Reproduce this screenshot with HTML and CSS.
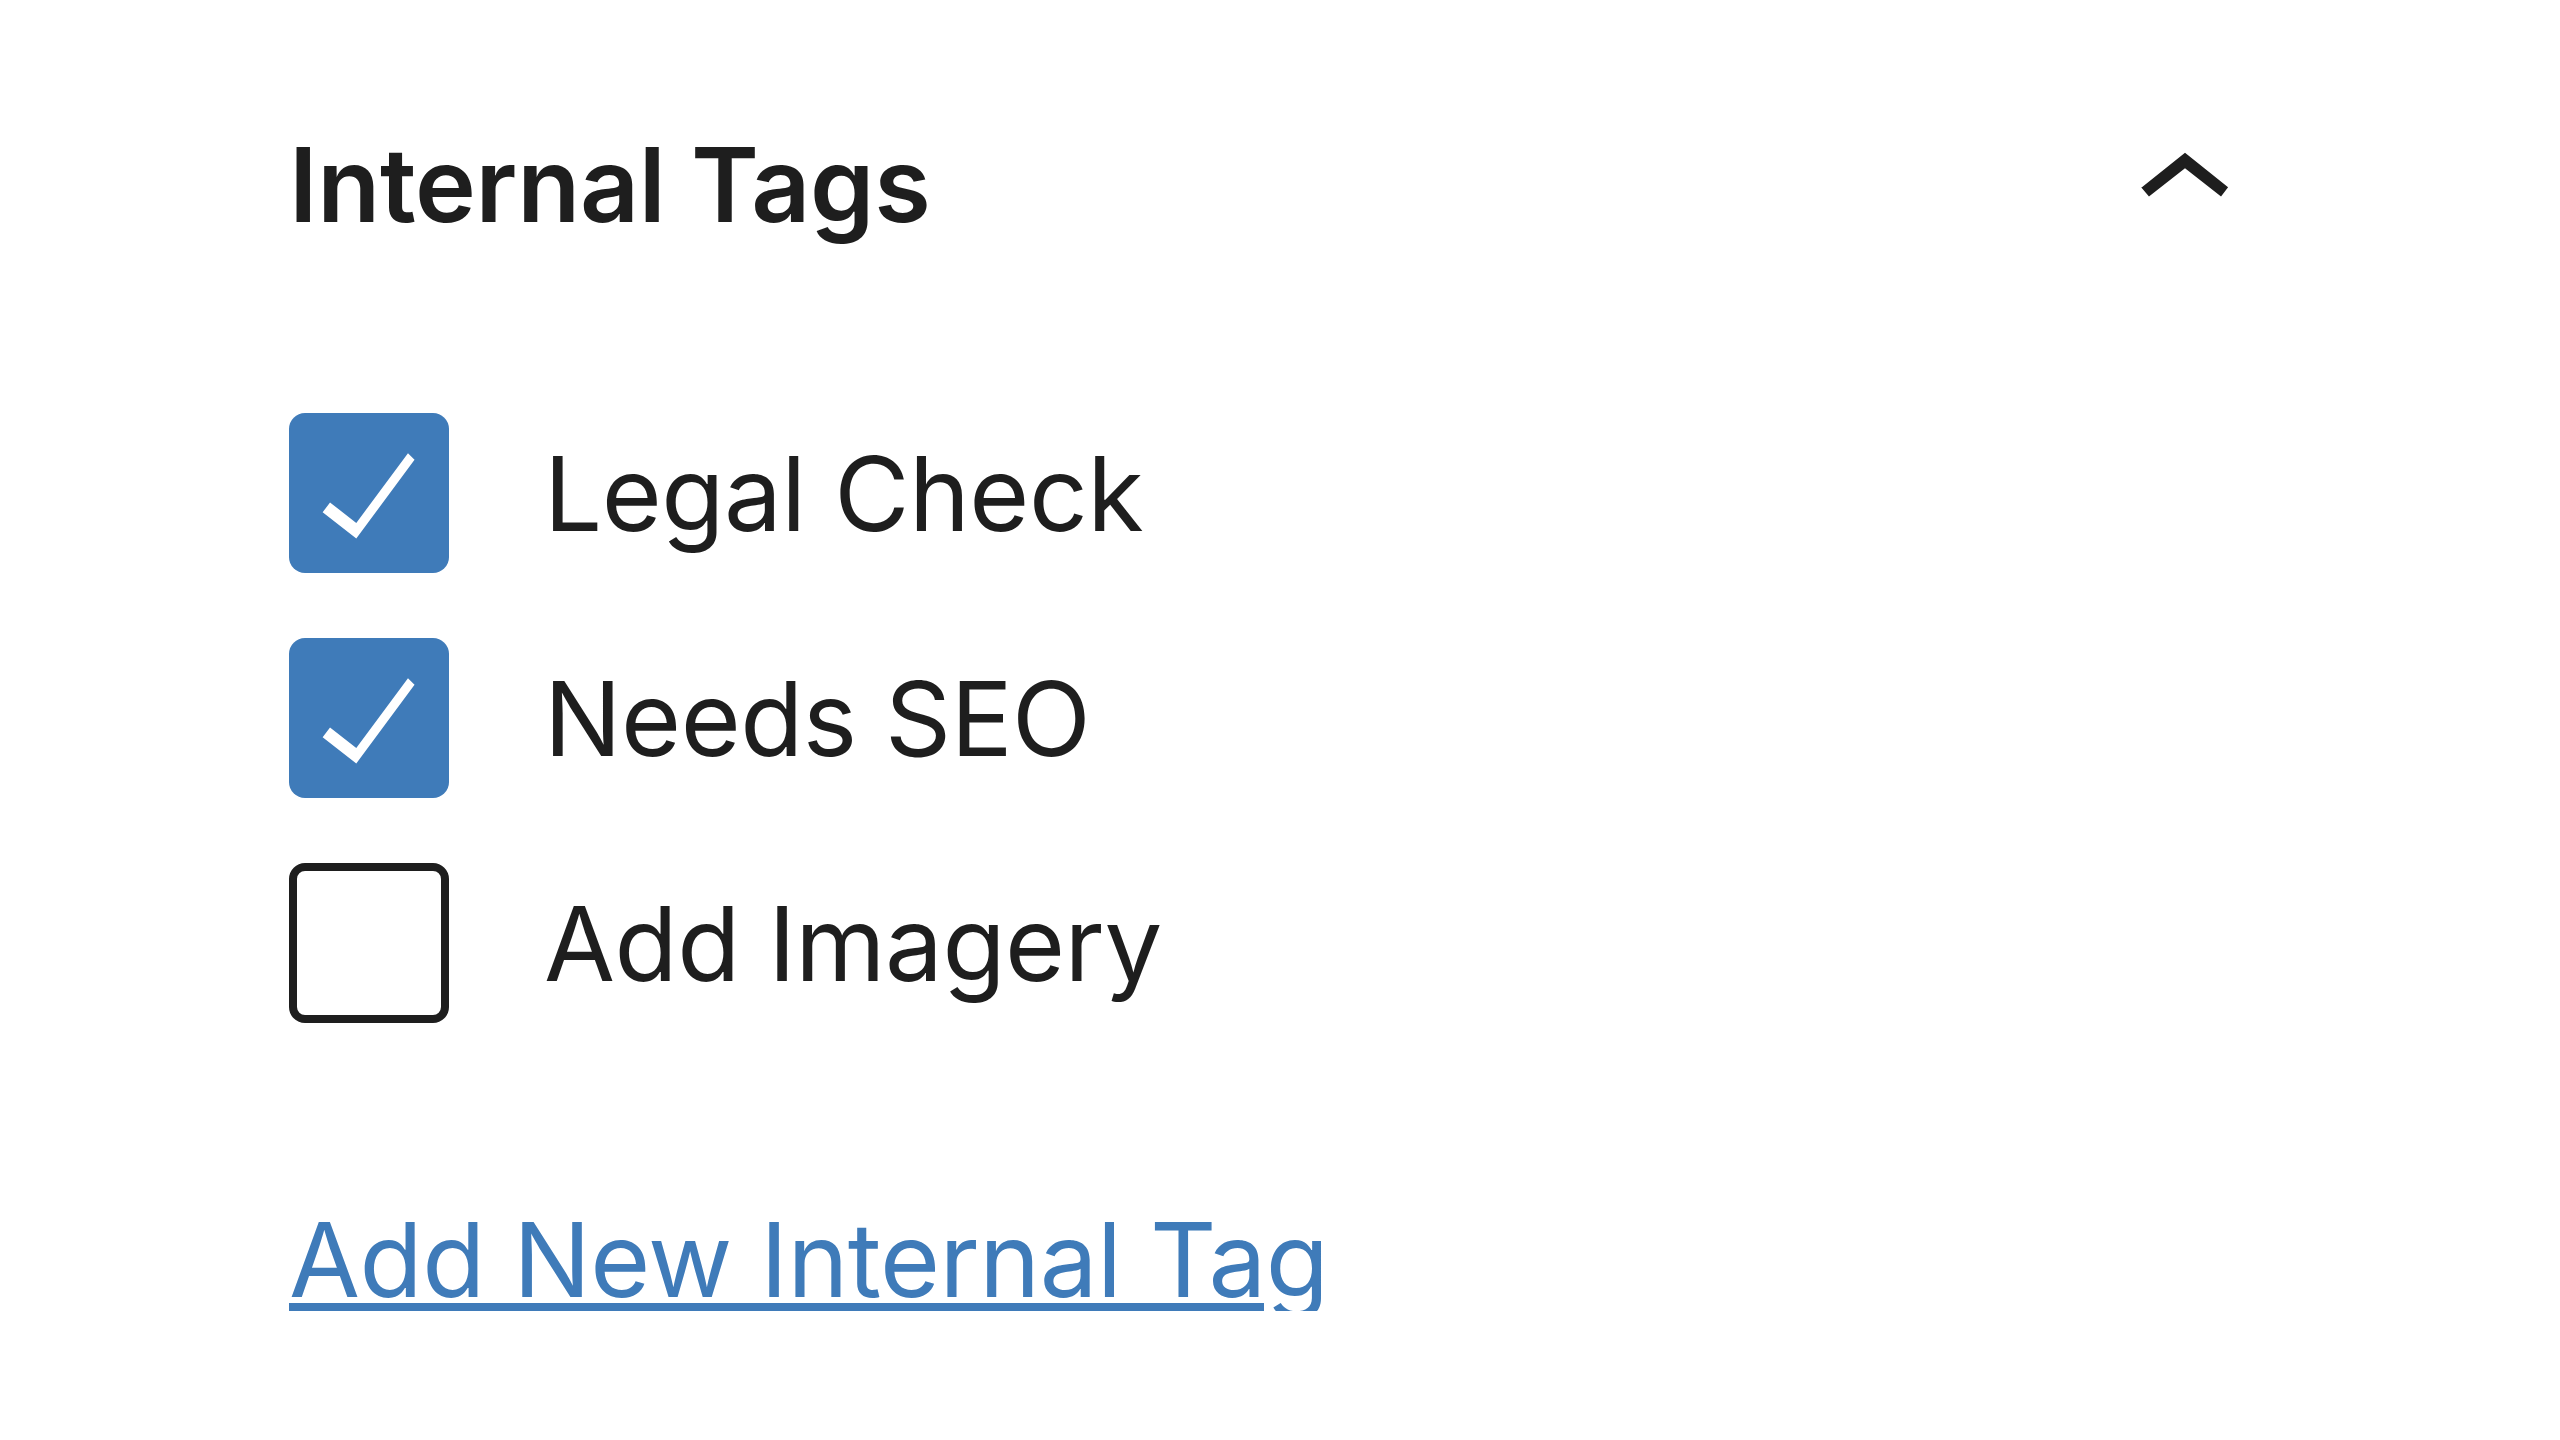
FILE: index.html
```html
<!DOCTYPE html>
<html lang="en">
<head>
<meta charset="utf-8">
<title>Internal Tags</title>
<link rel="stylesheet" href="styles.css">
</head>
<body>
<div class="panel">
  <div class="panel-header">
    <h2 class="panel-title">Internal Tags</h2>
    <svg class="chevron" viewBox="0 0 24 24" aria-hidden="true"><path d="M6.5 12.4L12 8l5.5 4.4-.9 1.2L12 10l-4.6 3.6-1-1.2z"/></svg>
  </div>
  <ul class="tag-list">
    <li class="tag-row">
      <span class="checkbox is-checked"><svg viewBox="2.2 2.2 19.5 19.5" aria-hidden="true"><path d="M16.7 7.1l-6.3 8.5-3.2-2.5-.9 1.2 4.1 3.2 7.1-9.6-.8-.8z"/></svg></span>
      <span class="tag-label">Legal Check</span>
    </li>
    <li class="tag-row">
      <span class="checkbox is-checked"><svg viewBox="2.2 2.2 19.5 19.5" aria-hidden="true"><path d="M16.7 7.1l-6.3 8.5-3.2-2.5-.9 1.2 4.1 3.2 7.1-9.6-.8-.8z"/></svg></span>
      <span class="tag-label">Needs SEO</span>
    </li>
    <li class="tag-row">
      <span class="checkbox"></span>
      <span class="tag-label">Add Imagery</span>
    </li>
  </ul>
  <a class="add-link" href="#">Add New Internal Tag</a>
</div>
</body>
</html>
```
FILE: styles.css
```css
html, body {
  margin: 0;
  padding: 0;
  background: #ffffff;
}

body {
  font-family: Inter, "Noto Sans", sans-serif;
  color: #1e1e1e;
}

.panel {
  padding: 90px 281px 0 289px;
  display: flex;
  flex-direction: column;
  align-items: flex-start;
}

.panel-header {
  align-self: stretch;
  display: flex;
  justify-content: space-between;
  align-items: center;
  height: 188px;
}

.panel-title {
  margin: 0;
  font-size: 103px;
  line-height: 1;
  font-weight: 600;
  letter-spacing: -0.3px;
}

.chevron {
  width: 188px;
  height: 188px;
  fill: #1e1e1e;
}

.tag-list {
  list-style: none;
  margin: 135px 0 0;
  padding: 0;
  display: flex;
  flex-direction: column;
  gap: 65px;
}

.tag-row {
  display: flex;
  align-items: center;
  gap: 95px;
  height: 160px;
}

.checkbox {
  box-sizing: border-box;
  width: 160px;
  height: 160px;
  border: 8px solid #1e1e1e;
  border-radius: 16px;
  background: #ffffff;
  flex: none;
}

.checkbox.is-checked {
  border: none;
  background: #3f7bb9;
}

.checkbox svg {
  display: block;
  width: 160px;
  height: 160px;
  fill: #ffffff;
}

.tag-label {
  font-size: 103px;
  line-height: 1;
  font-weight: 400;
  letter-spacing: -0.5px;
}

.add-link {
  margin-top: 185px;
  font-size: 103px;
  line-height: 1;
  color: #3f7bb9;
  text-decoration: underline;
  text-decoration-thickness: 9px;
  text-underline-offset: 6px;
  letter-spacing: -0.5px;
}
```
